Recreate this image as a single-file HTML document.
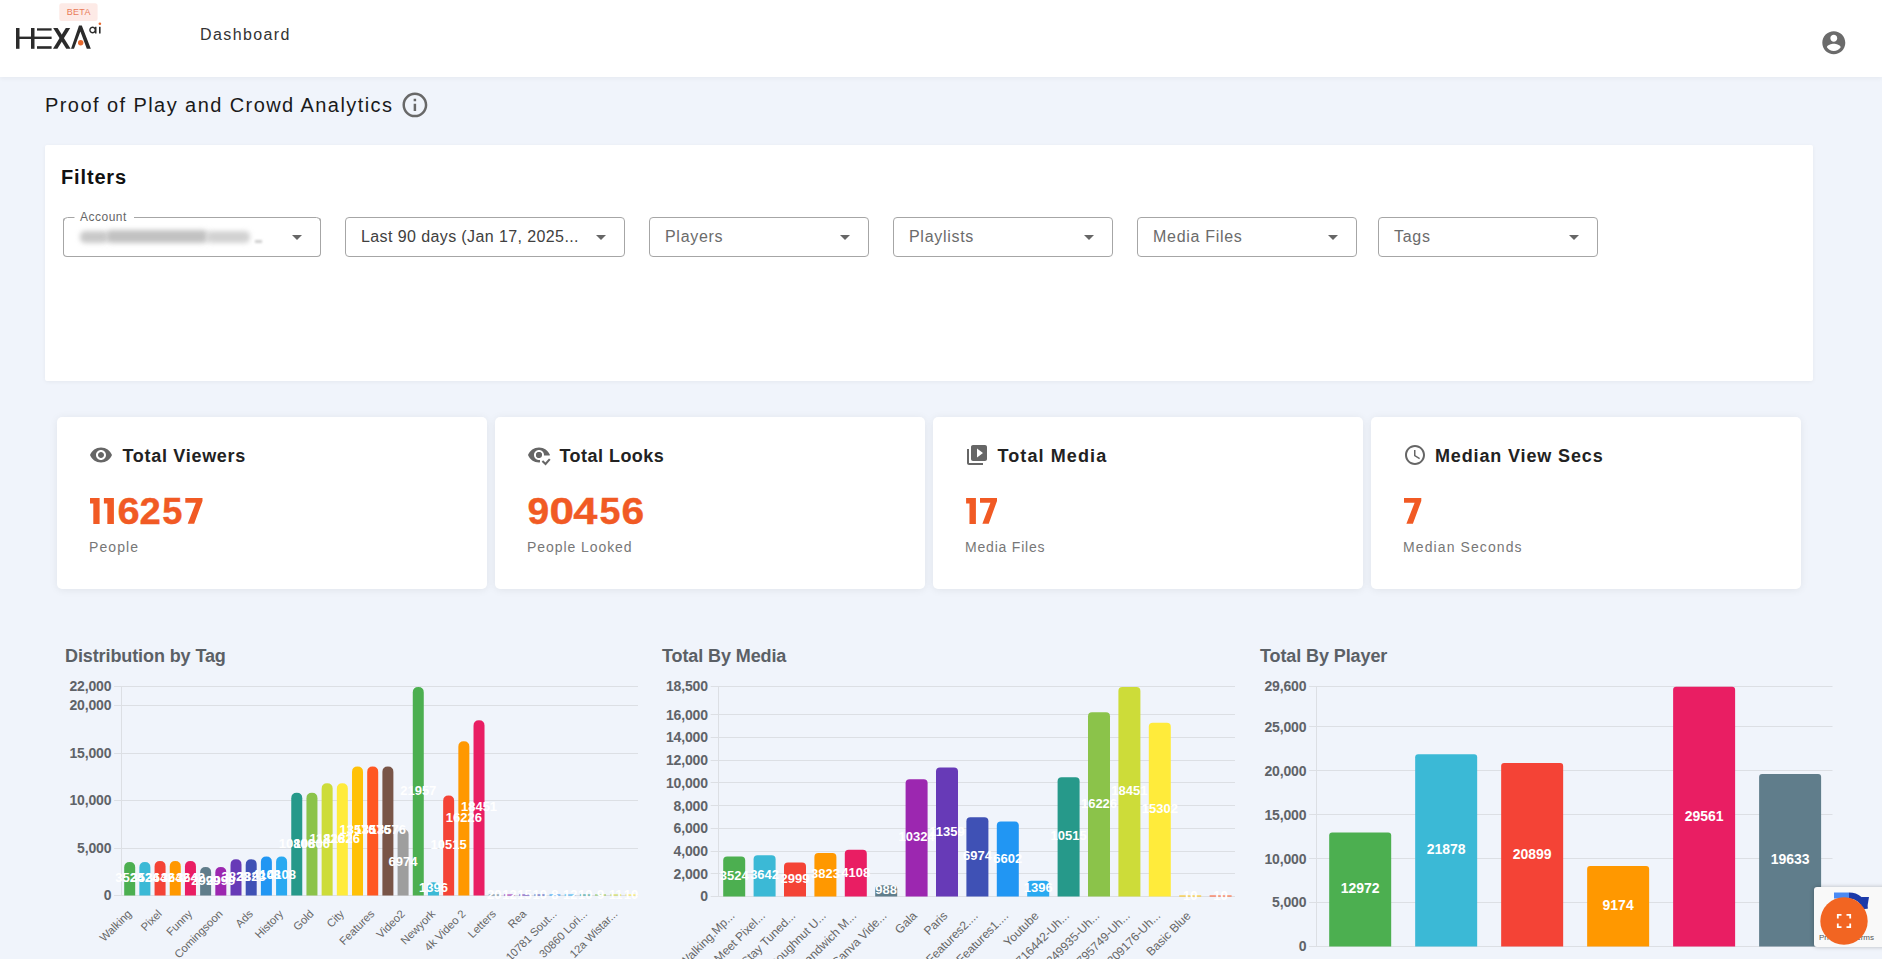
<!DOCTYPE html>
<html><head><meta charset="utf-8">
<style>
*{box-sizing:border-box;margin:0;padding:0}
html,body{width:1882px;height:959px;overflow:hidden}
body{background:#f0f4fb;font-family:"Liberation Sans", sans-serif;position:relative;color:#1a1a1a}
.abs{position:absolute}
#header{position:absolute;left:0;top:0;width:1882px;height:77px;background:#fff;box-shadow:0 2px 4px rgba(0,0,0,0.04)}
.nav{position:absolute;left:200px;top:26px;font-size:16px;color:#333;letter-spacing:1.4px;white-space:nowrap}
.title{position:absolute;left:45px;top:94px;font-size:20px;color:#1a1a1a;letter-spacing:1.43px;white-space:nowrap}
#filters{position:absolute;left:45px;top:145px;width:1768px;height:235.5px;background:#fff;border-radius:2px;box-shadow:0 1px 4px rgba(0,0,0,0.05)}
.ftitle{position:absolute;left:16px;top:21px;font-size:20px;font-weight:bold;color:#111;letter-spacing:0.85px}
.dd{position:absolute;top:72px;height:40px;border:1px solid #a6a6a6;border-radius:4px;font-size:16px;color:#666;letter-spacing:0.7px}
.dd .t{position:absolute;left:15px;top:10px;white-space:nowrap}
.dd .arr{position:absolute;right:18px;top:17px;width:0;height:0;border-left:5px solid transparent;border-right:5px solid transparent;border-top:5px solid #666}
.card{position:absolute;top:417px;width:430px;height:172px;background:#fff;border-radius:5px;box-shadow:0 1px 8px rgba(0,0,0,0.07)}
.card .ct{position:absolute;left:64px;top:29px;font-size:18px;font-weight:bold;color:#222;letter-spacing:0.86px;white-space:nowrap}
.card .num{position:absolute;left:33px;top:73px;font-size:37.5px;font-weight:bold;color:#f15a24;letter-spacing:0px;-webkit-text-stroke:0.5px #f15a24}
.card .sub{position:absolute;left:32px;top:121.5px;font-size:14px;color:#777;letter-spacing:1.1px;white-space:nowrap}
.card svg.ic{position:absolute;left:32px;top:26px}
.chtitle{position:absolute;top:646px;font-size:18px;letter-spacing:-0.1px;font-weight:bold;color:#5b6066;white-space:nowrap}
svg text{font-family:"Liberation Sans", sans-serif}
</style></head><body>
<div id="header">
  <svg class="abs" style="left:0;top:0" width="120" height="60" viewBox="0 0 120 60">
    <rect x="59.3" y="3.2" width="38.3" height="17.8" rx="2.5" fill="#fdeae6"/>
    <text x="78.8" y="15" font-size="9" fill="#e97b58" text-anchor="middle" letter-spacing="0.3">BETA</text>
    <g fill="#2b2b2b">
      <rect x="16" y="28" width="3.5" height="20.8"/>
      <rect x="31" y="28" width="3.5" height="20.8"/>
      <rect x="16" y="36.6" width="35.6" height="2.4"/>
      <rect x="37" y="28.3" width="14.6" height="2.3"/>
      <rect x="37" y="46.2" width="14.6" height="2.6"/>
      <polygon points="53.2,28 57.6,28 70.6,48.8 66.2,48.8"/>
      <polygon points="65.8,28 70.2,28 57.4,48.8 53,48.8"/>
      <polygon points="79,25.6 81.8,25.6 90.8,48.8 86.8,48.8 80.4,31.5 74,48.8 71,48.8"/>
      <path d="M92.6 26.6 a3.4 3.4 0 1 0 0.01 0 z M92.6 28 a2 2 0 1 1 -0.01 0 z" fill-rule="evenodd"/>
      <rect x="95" y="26.8" width="1.5" height="6.7"/>
      <rect x="99" y="26.8" width="1.6" height="6.7"/>
    </g>
    <circle cx="80.7" cy="42.7" r="2.7" fill="#e8692e"/>
    <circle cx="99.9" cy="23.7" r="1.3" fill="#e8692e"/>
  </svg>
  <div class="nav">Dashboard</div>
  <svg class="abs" style="left:1820.2px;top:28.6px" width="27.6" height="27.6" viewBox="0 0 24 24" fill="#6b6b6b">
    <path d="M12 2C6.48 2 2 6.48 2 12s4.48 10 10 10 10-4.48 10-10S17.52 2 12 2zm0 3c1.66 0 3 1.34 3 3s-1.34 3-3 3-3-1.34-3-3 1.34-3 3-3zm0 14.2c-2.5 0-4.71-1.28-6-3.22.03-1.99 4-3.08 6-3.08 1.99 0 5.970 1.09 6 3.08-1.29 1.940-3.5 3.22-6 3.22z"/>
  </svg>
</div>
<div class="title">Proof of Play and Crowd Analytics</div>
<svg class="abs" style="left:399.7px;top:89.5px" width="29.8" height="29.8" viewBox="0 0 24 24" fill="#686868">
  <path d="M11 7h2v2h-2zm0 4h2v6h-2zm1-9C6.48 2 2 6.48 2 12s4.48 10 10 10 10-4.48 10-10S17.52 2 12 2m0 18c-4.41 0-8-3.59-8-8s3.59-8 8-8 8 3.59 8 8-3.59 8-8 8"/>
</svg>
<div id="filters">
  <div class="ftitle">Filters</div>
  <div class="dd" style="left:18px;width:258px;border-top-color:transparent">
    <svg class="abs" style="left:-1px;top:-1px" width="258" height="10"><path d="M0.5 9 V4.5 Q0.5 0.5 4.5 0.5 H11.5 M71 0.5 H253.5 Q257.5 0.5 257.5 4.5 V9" fill="none" stroke="#a6a6a6" stroke-width="1"/></svg>
    <div class="abs" style="left:16px;top:-8px;font-size:12px;color:#666;letter-spacing:0.5px">Account</div>
    <div class="abs" style="left:16px;top:13px;width:28px;height:12px;border-radius:5px;background:#c9c9c9;filter:blur(2.5px)"></div>
    <div class="abs" style="left:42px;top:12px;width:102px;height:13px;border-radius:5px;background:#c2c2c2;filter:blur(2.5px)"></div>
    <div class="abs" style="left:142px;top:13px;width:44px;height:12px;border-radius:5px;background:#d2d2d2;filter:blur(2.5px)"></div>
    <div class="abs" style="left:191px;top:22px;width:7px;height:2.5px;background:#cfcfcf;filter:blur(0.8px)"></div>
    <div class="arr"></div>
  </div>
  <div class="dd" style="left:300px;width:280px;letter-spacing:0.4px"><div class="t" style="color:#404040">Last 90 days (Jan 17, 2025...</div><div class="arr"></div></div>
  <div class="dd" style="left:604px;width:220px"><div class="t" style="color:#6b6b6b">Players</div><div class="arr"></div></div>
  <div class="dd" style="left:848px;width:220px"><div class="t" style="color:#6b6b6b">Playlists</div><div class="arr"></div></div>
  <div class="dd" style="left:1092px;width:220px"><div class="t" style="color:#6b6b6b">Media Files</div><div class="arr"></div></div>
  <div class="dd" style="left:1333px;width:220px"><div class="t" style="color:#6b6b6b">Tags</div><div class="arr"></div></div>
</div>
<div class="card" style="left:57px">
  <svg class="ic" width="24" height="24" viewBox="0 0 24 24" fill="#666"><path d="M12 4.5C7 4.5 2.73 7.61 1 12c1.73 4.39 6 7.5 11 7.5s9.27-3.11 11-7.5c-1.73-4.39-6-7.5-11-7.5M12 17c-2.76 0-5-2.24-5-5s2.24-5 5-5 5 2.24 5 5-2.24 5-5 5m0-8c-1.66 0-3 1.34-3 3s1.34 3 3 3 3-1.34 3-3-1.34-3-3-3"/></svg>
  <div class="ct" style="letter-spacing:0.7px;left:65.5px">Total Viewers</div><div class="sub" style="">People</div>
</div>
<div class="card" style="left:495px">
  <svg class="ic" width="24" height="24" viewBox="0 0 24 24" fill="#666"><defs><clipPath id="clk"><path d="M0 0H24V12.6H13V24H0Z"/></clipPath></defs><path clip-path="url(#clk)" d="M12 4.5C7 4.5 2.73 7.61 1 12c1.73 4.39 6 7.5 11 7.5s9.27-3.11 11-7.5c-1.73-4.39-6-7.5-11-7.5M12 17c-2.76 0-5-2.24-5-5s2.24-5 5-5 5 2.24 5 5-2.24 5-5 5m0-8c-1.66 0-3 1.34-3 3s1.34 3 3 3 3-1.34 3-3-1.34-3-3-3"/><circle cx="12" cy="12" r="3"/><path d="M15.4 18.1l3.1 2.9l4.3-4.9" fill="none" stroke="#666" stroke-width="2.1"/></svg>
  <div class="ct" style="letter-spacing:0.46px;left:64.5px">Total Looks</div><div class="sub" style="letter-spacing:0.93px">People Looked</div>
</div>
<div class="card" style="left:933px">
  <svg class="ic" width="24" height="24" viewBox="0 0 24 24" fill="#666"><path d="M4 6H2v14c0 1.1.9 2 2 2h14v-2H4zm16-4H8c-1.1 0-2 .9-2 2v12c0 1.1.9 2 2 2h12c1.1 0 2-.9 2-2V4c0-1.1-.9-2-2-2m-8 12.5v-9l6 4.5z"/></svg>
  <div class="ct" style="letter-spacing:1.1px;left:64.5px">Total Media</div><div class="sub" style="letter-spacing:0.8px">Media Files</div>
</div>
<div class="card" style="left:1371px">
  <svg class="ic" width="24" height="24" viewBox="0 0 24 24" fill="#666"><path d="M11.99 2C6.47 2 2 6.48 2 12s4.47 10 9.99 10C17.52 22 22 17.52 22 12S17.52 2 11.99 2M12 20c-4.42 0-8-3.58-8-8s3.58-8 8-8 8 3.58 8 8-3.58 8-8 8m.5-13H11v6l5.25 3.15.75-1.23-4.5-2.67z"/></svg>
  <div class="ct" style="">Median View Secs</div><div class="sub" style="letter-spacing:1.1px">Median Seconds</div>
</div>

<div class="chtitle" style="left:65px">Distribution by Tag</div>
<div class="chtitle" style="left:662px">Total By Media</div>
<div class="chtitle" style="left:1260px">Total By Player</div>
<svg class="abs" style="left:0;top:0" width="1882" height="959">
<polygon fill="#f15a24" points="90.00,498.00 99.60,498.00 99.60,523.90 93.30,523.90 93.30,503.60 90.00,503.60"/>
<polygon fill="#f15a24" points="103.90,498.00 113.90,498.00 113.90,523.90 107.34,523.90 107.34,503.60 103.90,503.60"/>
<text transform="translate(119.20,524.2) scale(1.076,1)" x="-1.50" font-size="37" font-weight="bold" fill="#f15a24" stroke="#f15a24" stroke-width="0.4">6</text>
<text transform="translate(141.10,524.2) scale(1.035,1)" x="-1.50" font-size="37" font-weight="bold" fill="#f15a24" stroke="#f15a24" stroke-width="0.4">2</text>
<text transform="translate(163.70,524.2) scale(0.978,1)" x="-1.50" font-size="37" font-weight="bold" fill="#f15a24" stroke="#f15a24" stroke-width="0.4">5</text>
<polygon fill="#f15a24" points="185.30,497.90 202.50,497.90 202.50,500.90 194.15,523.70 187.69,523.70 195.84,502.70 185.30,502.70"/>
<text transform="translate(529.00,524.2) scale(1.053,1)" x="-1.50" font-size="37" font-weight="bold" fill="#f15a24" stroke="#f15a24" stroke-width="0.4">9</text>
<text transform="translate(551.40,524.2) scale(1.194,1)" x="-1.50" font-size="37" font-weight="bold" fill="#f15a24" stroke="#f15a24" stroke-width="0.4">0</text>
<text transform="translate(574.90,524.2) scale(1.172,1)" x="-1.50" font-size="37" font-weight="bold" fill="#f15a24" stroke="#f15a24" stroke-width="0.4">4</text>
<text transform="translate(601.10,524.2) scale(1.017,1)" x="-1.50" font-size="37" font-weight="bold" fill="#f15a24" stroke="#f15a24" stroke-width="0.4">5</text>
<text transform="translate(623.20,524.2) scale(1.100,1)" x="-1.50" font-size="37" font-weight="bold" fill="#f15a24" stroke="#f15a24" stroke-width="0.4">6</text>
<polygon fill="#f15a24" points="966.10,498.00 975.90,498.00 975.90,523.90 969.47,523.90 969.47,503.60 966.10,503.60"/>
<polygon fill="#f15a24" points="980.00,497.90 997.00,497.90 997.00,500.90 988.75,523.70 982.36,523.70 990.42,502.70 980.00,502.70"/>
<polygon fill="#f15a24" points="1404.00,497.90 1421.30,497.90 1421.30,500.90 1412.90,523.70 1406.40,523.70 1414.60,502.70 1404.00,502.70"/>
<line x1="114.1" y1="895.5" x2="638.0" y2="895.5" stroke="#dcdfe4" stroke-width="1"/>
<text x="111.3" y="900.3" text-anchor="end" font-size="14" font-weight="bold" fill="#5f6368" letter-spacing="-0.15">0</text>
<line x1="114.1" y1="848.5" x2="638.0" y2="848.5" stroke="#dcdfe4" stroke-width="1"/>
<text x="111.3" y="852.8" text-anchor="end" font-size="14" font-weight="bold" fill="#5f6368" letter-spacing="-0.15">5,000</text>
<line x1="114.1" y1="800.5" x2="638.0" y2="800.5" stroke="#dcdfe4" stroke-width="1"/>
<text x="111.3" y="805.3" text-anchor="end" font-size="14" font-weight="bold" fill="#5f6368" letter-spacing="-0.15">10,000</text>
<line x1="114.1" y1="753.5" x2="638.0" y2="753.5" stroke="#dcdfe4" stroke-width="1"/>
<text x="111.3" y="757.8" text-anchor="end" font-size="14" font-weight="bold" fill="#5f6368" letter-spacing="-0.15">15,000</text>
<line x1="114.1" y1="705.5" x2="638.0" y2="705.5" stroke="#dcdfe4" stroke-width="1"/>
<text x="111.3" y="710.3" text-anchor="end" font-size="14" font-weight="bold" fill="#5f6368" letter-spacing="-0.15">20,000</text>
<line x1="114.1" y1="686.5" x2="638.0" y2="686.5" stroke="#dcdfe4" stroke-width="1"/>
<text x="111.3" y="691.3" text-anchor="end" font-size="14" font-weight="bold" fill="#5f6368" letter-spacing="-0.15">22,000</text>
<line x1="121.5" y1="686.5" x2="121.5" y2="895.5" stroke="#dcdfe4" stroke-width="1"/>
<path d="M124.19 895.50 V867.52 Q124.19 862.02 129.69 862.02 H129.69 Q135.19 862.02 135.19 867.52 V895.50 Z" fill="#4caf50"/>
<path d="M139.38 895.50 V867.52 Q139.38 862.02 144.88 862.02 H144.88 Q150.38 862.02 150.38 867.52 V895.50 Z" fill="#3bb9d6"/>
<path d="M154.57 895.50 V866.40 Q154.57 860.90 160.07 860.90 H160.07 Q165.57 860.90 165.57 866.40 V895.50 Z" fill="#f44336"/>
<path d="M169.76 895.50 V866.40 Q169.76 860.90 175.26 860.90 H175.26 Q180.76 860.90 180.76 866.40 V895.50 Z" fill="#ff9800"/>
<path d="M184.95 895.50 V866.40 Q184.95 860.90 190.45 860.90 H190.45 Q195.95 860.90 195.95 866.40 V895.50 Z" fill="#e91e63"/>
<path d="M200.14 895.50 V872.51 Q200.14 867.01 205.64 867.01 H205.64 Q211.14 867.01 211.14 872.51 V895.50 Z" fill="#607d8b"/>
<path d="M215.32 895.50 V872.51 Q215.32 867.01 220.82 867.01 H220.82 Q226.32 867.01 226.32 872.51 V895.50 Z" fill="#9c27b0"/>
<path d="M230.51 895.50 V864.68 Q230.51 859.18 236.01 859.18 H236.01 Q241.51 859.18 241.51 864.68 V895.50 Z" fill="#673ab7"/>
<path d="M245.70 895.50 V864.68 Q245.70 859.18 251.20 859.18 H251.20 Q256.70 859.18 256.70 864.68 V895.50 Z" fill="#3f51b5"/>
<path d="M260.89 895.50 V861.97 Q260.89 856.47 266.39 856.47 H266.39 Q271.89 856.47 271.89 861.97 V895.50 Z" fill="#2196f3"/>
<path d="M276.08 895.50 V861.97 Q276.08 856.47 281.58 856.47 H281.58 Q287.08 856.47 287.08 861.97 V895.50 Z" fill="#29a9f1"/>
<path d="M291.26 895.50 V798.34 Q291.26 792.84 296.76 792.84 H296.76 Q302.26 792.84 302.26 798.34 V895.50 Z" fill="#26998a"/>
<path d="M306.45 895.50 V798.34 Q306.45 792.84 311.95 792.84 H311.95 Q317.45 792.84 317.45 798.34 V895.50 Z" fill="#8bc34a"/>
<path d="M321.64 895.50 V788.65 Q321.64 783.15 327.14 783.15 H327.14 Q332.64 783.15 332.64 788.65 V895.50 Z" fill="#cddc39"/>
<path d="M336.83 895.50 V788.65 Q336.83 783.15 342.33 783.15 H342.33 Q347.83 783.15 347.83 788.65 V895.50 Z" fill="#ffeb3b"/>
<path d="M352.02 895.50 V772.03 Q352.02 766.53 357.52 766.53 H357.52 Q363.02 766.53 363.02 772.03 V895.50 Z" fill="#ffc107"/>
<path d="M367.21 895.50 V772.03 Q367.21 766.53 372.71 766.53 H372.71 Q378.21 766.53 378.21 772.03 V895.50 Z" fill="#ff5722"/>
<path d="M382.39 895.50 V772.03 Q382.39 766.53 387.89 766.53 H387.89 Q393.39 766.53 393.39 772.03 V895.50 Z" fill="#795548"/>
<path d="M397.58 895.50 V834.75 Q397.58 829.25 403.08 829.25 H403.08 Q408.58 829.25 408.58 834.75 V895.50 Z" fill="#9e9e9e"/>
<path d="M412.77 895.50 V692.41 Q412.77 686.91 418.27 686.91 H418.27 Q423.77 686.91 423.77 692.41 V895.50 Z" fill="#4caf50"/>
<path d="M427.96 895.50 V887.74 Q427.96 882.24 433.46 882.24 H433.46 Q438.96 882.24 438.96 887.74 V895.50 Z" fill="#3bb9d6"/>
<path d="M443.15 895.50 V801.11 Q443.15 795.61 448.65 795.61 H448.65 Q454.15 795.61 454.15 801.11 V895.50 Z" fill="#f44336"/>
<path d="M458.34 895.50 V746.85 Q458.34 741.35 463.84 741.35 H463.84 Q469.34 741.35 469.34 746.85 V895.50 Z" fill="#ff9800"/>
<path d="M473.52 895.50 V725.72 Q473.52 720.22 479.02 720.22 H479.02 Q484.52 720.22 484.52 725.72 V895.50 Z" fill="#e91e63"/>
<rect x="488.71" y="894.50" width="11.00" height="1" fill="#607d8b"/>
<rect x="503.90" y="894.50" width="11.00" height="1" fill="#9c27b0"/>
<rect x="519.09" y="894.50" width="11.00" height="1" fill="#673ab7"/>
<rect x="534.28" y="894.50" width="11.00" height="1" fill="#3f51b5"/>
<rect x="549.46" y="894.50" width="11.00" height="1" fill="#2196f3"/>
<rect x="564.65" y="894.50" width="11.00" height="1" fill="#29a9f1"/>
<rect x="579.84" y="894.50" width="11.00" height="1" fill="#26998a"/>
<rect x="595.03" y="894.50" width="11.00" height="1" fill="#8bc34a"/>
<rect x="610.22" y="894.50" width="11.00" height="1" fill="#cddc39"/>
<rect x="625.41" y="894.50" width="11.00" height="1" fill="#ffeb3b"/>
<text x="129.69" y="882.24" text-anchor="middle" font-size="13" font-weight="bold" fill="#fff">3524</text>
<text x="144.88" y="882.24" text-anchor="middle" font-size="13" font-weight="bold" fill="#fff">3524</text>
<text x="160.07" y="881.68" text-anchor="middle" font-size="13" font-weight="bold" fill="#fff">3642</text>
<text x="175.26" y="881.68" text-anchor="middle" font-size="13" font-weight="bold" fill="#fff">3642</text>
<text x="190.45" y="881.68" text-anchor="middle" font-size="13" font-weight="bold" fill="#fff">3642</text>
<text x="205.64" y="884.73" text-anchor="middle" font-size="13" font-weight="bold" fill="#fff">2999</text>
<text x="220.82" y="884.73" text-anchor="middle" font-size="13" font-weight="bold" fill="#fff">2999</text>
<text x="236.01" y="880.82" text-anchor="middle" font-size="13" font-weight="bold" fill="#fff">3823</text>
<text x="251.20" y="880.82" text-anchor="middle" font-size="13" font-weight="bold" fill="#fff">3823</text>
<text x="266.39" y="879.47" text-anchor="middle" font-size="13" font-weight="bold" fill="#fff">4108</text>
<text x="281.58" y="879.47" text-anchor="middle" font-size="13" font-weight="bold" fill="#fff">4108</text>
<text x="296.76" y="847.65" text-anchor="middle" font-size="13" font-weight="bold" fill="#fff">10806</text>
<text x="311.95" y="847.65" text-anchor="middle" font-size="13" font-weight="bold" fill="#fff">10806</text>
<text x="327.14" y="842.81" text-anchor="middle" font-size="13" font-weight="bold" fill="#fff">11826</text>
<text x="342.33" y="842.81" text-anchor="middle" font-size="13" font-weight="bold" fill="#fff">11826</text>
<text x="357.52" y="834.49" text-anchor="middle" font-size="13" font-weight="bold" fill="#fff">13576</text>
<text x="372.71" y="834.49" text-anchor="middle" font-size="13" font-weight="bold" fill="#fff">13576</text>
<text x="387.89" y="834.49" text-anchor="middle" font-size="13" font-weight="bold" fill="#fff">13576</text>
<text x="403.08" y="865.85" text-anchor="middle" font-size="13" font-weight="bold" fill="#fff">6974</text>
<text x="418.27" y="794.68" text-anchor="middle" font-size="13" font-weight="bold" fill="#fff">21957</text>
<text x="433.46" y="892.35" text-anchor="middle" font-size="13" font-weight="bold" fill="#fff">1396</text>
<text x="448.65" y="849.03" text-anchor="middle" font-size="13" font-weight="bold" fill="#fff">10515</text>
<text x="463.84" y="821.91" text-anchor="middle" font-size="13" font-weight="bold" fill="#fff">16226</text>
<text x="479.02" y="811.34" text-anchor="middle" font-size="13" font-weight="bold" fill="#fff">18451</text>
<text x="494.21" y="898.88" text-anchor="middle" font-size="13" font-weight="bold" fill="#fff">20</text>
<text x="509.40" y="898.92" text-anchor="middle" font-size="13" font-weight="bold" fill="#fff">12</text>
<text x="524.59" y="898.91" text-anchor="middle" font-size="13" font-weight="bold" fill="#fff">15</text>
<text x="539.78" y="898.93" text-anchor="middle" font-size="13" font-weight="bold" fill="#fff">10</text>
<text x="554.96" y="898.94" text-anchor="middle" font-size="13" font-weight="bold" fill="#fff">8</text>
<text x="570.15" y="898.92" text-anchor="middle" font-size="13" font-weight="bold" fill="#fff">12</text>
<text x="585.34" y="898.93" text-anchor="middle" font-size="13" font-weight="bold" fill="#fff">10</text>
<text x="600.53" y="898.94" text-anchor="middle" font-size="13" font-weight="bold" fill="#fff">9</text>
<text x="615.72" y="898.93" text-anchor="middle" font-size="13" font-weight="bold" fill="#fff">11</text>
<text x="630.91" y="898.93" text-anchor="middle" font-size="13" font-weight="bold" fill="#fff">10</text>
<text transform="translate(132.19,914.50) rotate(-45)" text-anchor="end" font-size="11.2" fill="#666">Walking</text>
<text transform="translate(162.57,914.50) rotate(-45)" text-anchor="end" font-size="11.2" fill="#666">Pixel</text>
<text transform="translate(192.95,914.50) rotate(-45)" text-anchor="end" font-size="11.2" fill="#666">Funny</text>
<text transform="translate(223.32,914.50) rotate(-45)" text-anchor="end" font-size="11.2" fill="#666">Comingsoon</text>
<text transform="translate(253.70,914.50) rotate(-45)" text-anchor="end" font-size="11.2" fill="#666">Ads</text>
<text transform="translate(284.08,914.50) rotate(-45)" text-anchor="end" font-size="11.2" fill="#666">History</text>
<text transform="translate(314.45,914.50) rotate(-45)" text-anchor="end" font-size="11.2" fill="#666">Gold</text>
<text transform="translate(344.83,914.50) rotate(-45)" text-anchor="end" font-size="11.2" fill="#666">City</text>
<text transform="translate(375.21,914.50) rotate(-45)" text-anchor="end" font-size="11.2" fill="#666">Features</text>
<text transform="translate(405.58,914.50) rotate(-45)" text-anchor="end" font-size="11.2" fill="#666">Video2</text>
<text transform="translate(435.96,914.50) rotate(-45)" text-anchor="end" font-size="11.2" fill="#666">Newyork</text>
<text transform="translate(466.34,914.50) rotate(-45)" text-anchor="end" font-size="11.2" fill="#666">4k Video 2</text>
<text transform="translate(496.71,914.50) rotate(-45)" text-anchor="end" font-size="11.2" fill="#666">Letters</text>
<text transform="translate(527.09,914.50) rotate(-45)" text-anchor="end" font-size="11.2" fill="#666">Rea</text>
<text transform="translate(557.46,914.50) rotate(-45)" text-anchor="end" font-size="11.2" fill="#666">10781 Sout...</text>
<text transform="translate(587.84,914.50) rotate(-45)" text-anchor="end" font-size="11.2" fill="#666">30860 Lori...</text>
<text transform="translate(618.22,914.50) rotate(-45)" text-anchor="end" font-size="11.2" fill="#666">12a Wistar...</text>
<line x1="710.7" y1="896.5" x2="1235.0" y2="896.5" stroke="#dcdfe4" stroke-width="1"/>
<text x="707.9" y="901.3" text-anchor="end" font-size="14" font-weight="bold" fill="#5f6368" letter-spacing="-0.15">0</text>
<line x1="710.7" y1="873.5" x2="1235.0" y2="873.5" stroke="#dcdfe4" stroke-width="1"/>
<text x="707.9" y="878.6" text-anchor="end" font-size="14" font-weight="bold" fill="#5f6368" letter-spacing="-0.15">2,000</text>
<line x1="710.7" y1="851.5" x2="1235.0" y2="851.5" stroke="#dcdfe4" stroke-width="1"/>
<text x="707.9" y="855.9" text-anchor="end" font-size="14" font-weight="bold" fill="#5f6368" letter-spacing="-0.15">4,000</text>
<line x1="710.7" y1="828.5" x2="1235.0" y2="828.5" stroke="#dcdfe4" stroke-width="1"/>
<text x="707.9" y="833.2" text-anchor="end" font-size="14" font-weight="bold" fill="#5f6368" letter-spacing="-0.15">6,000</text>
<line x1="710.7" y1="805.5" x2="1235.0" y2="805.5" stroke="#dcdfe4" stroke-width="1"/>
<text x="707.9" y="810.5" text-anchor="end" font-size="14" font-weight="bold" fill="#5f6368" letter-spacing="-0.15">8,000</text>
<line x1="710.7" y1="782.5" x2="1235.0" y2="782.5" stroke="#dcdfe4" stroke-width="1"/>
<text x="707.9" y="787.8" text-anchor="end" font-size="14" font-weight="bold" fill="#5f6368" letter-spacing="-0.15">10,000</text>
<line x1="710.7" y1="760.5" x2="1235.0" y2="760.5" stroke="#dcdfe4" stroke-width="1"/>
<text x="707.9" y="765.1" text-anchor="end" font-size="14" font-weight="bold" fill="#5f6368" letter-spacing="-0.15">12,000</text>
<line x1="710.7" y1="737.5" x2="1235.0" y2="737.5" stroke="#dcdfe4" stroke-width="1"/>
<text x="707.9" y="742.4" text-anchor="end" font-size="14" font-weight="bold" fill="#5f6368" letter-spacing="-0.15">14,000</text>
<line x1="710.7" y1="714.5" x2="1235.0" y2="714.5" stroke="#dcdfe4" stroke-width="1"/>
<text x="707.9" y="719.7" text-anchor="end" font-size="14" font-weight="bold" fill="#5f6368" letter-spacing="-0.15">16,000</text>
<line x1="710.7" y1="686.5" x2="1235.0" y2="686.5" stroke="#dcdfe4" stroke-width="1"/>
<text x="707.9" y="691.3" text-anchor="end" font-size="14" font-weight="bold" fill="#5f6368" letter-spacing="-0.15">18,500</text>
<line x1="718.5" y1="686.5" x2="718.5" y2="896.5" stroke="#dcdfe4" stroke-width="1"/>
<path d="M723.20 896.50 V860.50 Q723.20 856.50 727.20 856.50 H741.20 Q745.20 856.50 745.20 860.50 V896.50 Z" fill="#4caf50"/>
<path d="M753.60 896.50 V859.16 Q753.60 855.16 757.60 855.16 H771.60 Q775.60 855.16 775.60 859.16 V896.50 Z" fill="#3bb9d6"/>
<path d="M784.00 896.50 V866.46 Q784.00 862.46 788.00 862.46 H802.00 Q806.00 862.46 806.00 866.46 V896.50 Z" fill="#f44336"/>
<path d="M814.40 896.50 V857.10 Q814.40 853.10 818.40 853.10 H832.40 Q836.40 853.10 836.40 857.10 V896.50 Z" fill="#ff9800"/>
<path d="M844.80 896.50 V853.87 Q844.80 849.87 848.80 849.87 H862.80 Q866.80 849.87 866.80 853.87 V896.50 Z" fill="#e91e63"/>
<path d="M875.20 896.50 V889.28 Q875.20 885.28 879.20 885.28 H893.20 Q897.20 885.28 897.20 889.28 V896.50 Z" fill="#607d8b"/>
<path d="M905.60 896.50 V783.31 Q905.60 779.31 909.60 779.31 H923.60 Q927.60 779.31 927.60 783.31 V896.50 Z" fill="#9c27b0"/>
<path d="M936.00 896.50 V771.56 Q936.00 767.56 940.00 767.56 H954.00 Q958.00 767.56 958.00 771.56 V896.50 Z" fill="#673ab7"/>
<path d="M966.40 896.50 V821.34 Q966.40 817.34 970.40 817.34 H984.40 Q988.40 817.34 988.40 821.34 V896.50 Z" fill="#3f51b5"/>
<path d="M996.80 896.50 V825.56 Q996.80 821.56 1000.80 821.56 H1014.80 Q1018.80 821.56 1018.80 825.56 V896.50 Z" fill="#2196f3"/>
<path d="M1027.20 896.50 V884.65 Q1027.20 880.65 1031.20 880.65 H1045.20 Q1049.20 880.65 1049.20 884.65 V896.50 Z" fill="#29a9f1"/>
<path d="M1057.60 896.50 V781.14 Q1057.60 777.14 1061.60 777.14 H1075.60 Q1079.60 777.14 1079.60 781.14 V896.50 Z" fill="#26998a"/>
<path d="M1088.00 896.50 V716.31 Q1088.00 712.31 1092.00 712.31 H1106.00 Q1110.00 712.31 1110.00 716.31 V896.50 Z" fill="#8bc34a"/>
<path d="M1118.40 896.50 V691.06 Q1118.40 687.06 1122.40 687.06 H1136.40 Q1140.40 687.06 1140.40 691.06 V896.50 Z" fill="#cddc39"/>
<path d="M1148.80 896.50 V726.80 Q1148.80 722.80 1152.80 722.80 H1166.80 Q1170.80 722.80 1170.80 726.80 V896.50 Z" fill="#ffeb3b"/>
<rect x="1179.20" y="895.50" width="22.00" height="1" fill="#ffc107"/>
<rect x="1209.60" y="895.50" width="22.00" height="1" fill="#ff5722"/>
<text x="734.20" y="879.98" text-anchor="middle" font-size="13" font-weight="bold" fill="#fff">3524</text>
<text x="764.60" y="879.31" text-anchor="middle" font-size="13" font-weight="bold" fill="#fff">3642</text>
<text x="795.00" y="882.96" text-anchor="middle" font-size="13" font-weight="bold" fill="#fff">2999</text>
<text x="825.40" y="878.28" text-anchor="middle" font-size="13" font-weight="bold" fill="#fff">3823</text>
<text x="855.80" y="876.66" text-anchor="middle" font-size="13" font-weight="bold" fill="#fff">4108</text>
<text x="886.20" y="894.37" text-anchor="middle" font-size="13" font-weight="bold" fill="#fff">988</text>
<text x="916.60" y="841.38" text-anchor="middle" font-size="13" font-weight="bold" fill="#fff">10324</text>
<text x="947.00" y="835.51" text-anchor="middle" font-size="13" font-weight="bold" fill="#fff">11359</text>
<text x="977.40" y="860.40" text-anchor="middle" font-size="13" font-weight="bold" fill="#fff">6974</text>
<text x="1007.80" y="862.51" text-anchor="middle" font-size="13" font-weight="bold" fill="#fff">6602</text>
<text x="1038.20" y="892.06" text-anchor="middle" font-size="13" font-weight="bold" fill="#fff">1396</text>
<text x="1068.60" y="840.30" text-anchor="middle" font-size="13" font-weight="bold" fill="#fff">10515</text>
<text x="1099.00" y="807.89" text-anchor="middle" font-size="13" font-weight="bold" fill="#fff">16226</text>
<text x="1129.40" y="795.26" text-anchor="middle" font-size="13" font-weight="bold" fill="#fff">18451</text>
<text x="1159.80" y="813.13" text-anchor="middle" font-size="13" font-weight="bold" fill="#fff">15302</text>
<text x="1190.20" y="899.92" text-anchor="middle" font-size="13" font-weight="bold" fill="#fff">10</text>
<text x="1220.60" y="899.92" text-anchor="middle" font-size="13" font-weight="bold" fill="#fff">10</text>
<text transform="translate(735.40,916.50) rotate(-45)" text-anchor="end" font-size="12" fill="#666">Walking.Mp...</text>
<text transform="translate(765.80,916.50) rotate(-45)" text-anchor="end" font-size="12" fill="#666">Meet Pixel...</text>
<text transform="translate(796.20,916.50) rotate(-45)" text-anchor="end" font-size="12" fill="#666">Stay Tuned...</text>
<text transform="translate(826.60,916.50) rotate(-45)" text-anchor="end" font-size="12" fill="#666">Doughnut U...</text>
<text transform="translate(857.00,916.50) rotate(-45)" text-anchor="end" font-size="12" fill="#666">Sandwich M...</text>
<text transform="translate(887.40,916.50) rotate(-45)" text-anchor="end" font-size="12" fill="#666">Canva Vide...</text>
<text transform="translate(917.80,916.50) rotate(-45)" text-anchor="end" font-size="12" fill="#666">Gala</text>
<text transform="translate(948.20,916.50) rotate(-45)" text-anchor="end" font-size="12" fill="#666">Paris</text>
<text transform="translate(978.60,916.50) rotate(-45)" text-anchor="end" font-size="12" fill="#666">Features2....</text>
<text transform="translate(1009.00,916.50) rotate(-45)" text-anchor="end" font-size="12" fill="#666">Features1....</text>
<text transform="translate(1039.40,916.50) rotate(-45)" text-anchor="end" font-size="12" fill="#666">Youtube</text>
<text transform="translate(1069.80,916.50) rotate(-45)" text-anchor="end" font-size="12" fill="#666">1716442-Uh...</text>
<text transform="translate(1100.20,916.50) rotate(-45)" text-anchor="end" font-size="12" fill="#666">1249935-Uh...</text>
<text transform="translate(1130.60,916.50) rotate(-45)" text-anchor="end" font-size="12" fill="#666">1795749-Uh...</text>
<text transform="translate(1161.00,916.50) rotate(-45)" text-anchor="end" font-size="12" fill="#666">1209176-Uh...</text>
<text transform="translate(1191.40,916.50) rotate(-45)" text-anchor="end" font-size="12" fill="#666">Basic Blue</text>
<line x1="1309.1" y1="946.5" x2="1832.5" y2="946.5" stroke="#dcdfe4" stroke-width="1"/>
<text x="1306.3" y="951.3" text-anchor="end" font-size="14" font-weight="bold" fill="#5f6368" letter-spacing="-0.15">0</text>
<line x1="1309.1" y1="902.5" x2="1832.5" y2="902.5" stroke="#dcdfe4" stroke-width="1"/>
<text x="1306.3" y="907.4" text-anchor="end" font-size="14" font-weight="bold" fill="#5f6368" letter-spacing="-0.15">5,000</text>
<line x1="1309.1" y1="858.5" x2="1832.5" y2="858.5" stroke="#dcdfe4" stroke-width="1"/>
<text x="1306.3" y="863.5" text-anchor="end" font-size="14" font-weight="bold" fill="#5f6368" letter-spacing="-0.15">10,000</text>
<line x1="1309.1" y1="814.5" x2="1832.5" y2="814.5" stroke="#dcdfe4" stroke-width="1"/>
<text x="1306.3" y="819.5" text-anchor="end" font-size="14" font-weight="bold" fill="#5f6368" letter-spacing="-0.15">15,000</text>
<line x1="1309.1" y1="770.5" x2="1832.5" y2="770.5" stroke="#dcdfe4" stroke-width="1"/>
<text x="1306.3" y="775.6" text-anchor="end" font-size="14" font-weight="bold" fill="#5f6368" letter-spacing="-0.15">20,000</text>
<line x1="1309.1" y1="726.5" x2="1832.5" y2="726.5" stroke="#dcdfe4" stroke-width="1"/>
<text x="1306.3" y="731.7" text-anchor="end" font-size="14" font-weight="bold" fill="#5f6368" letter-spacing="-0.15">25,000</text>
<line x1="1309.1" y1="686.5" x2="1832.5" y2="686.5" stroke="#dcdfe4" stroke-width="1"/>
<text x="1306.3" y="691.3" text-anchor="end" font-size="14" font-weight="bold" fill="#5f6368" letter-spacing="-0.15">29,600</text>
<line x1="1316.5" y1="686.5" x2="1316.5" y2="946.5" stroke="#dcdfe4" stroke-width="1"/>
<path d="M1329.19 946.50 V835.56 Q1329.19 832.56 1332.19 832.56 H1388.19 Q1391.19 832.56 1391.19 835.56 V946.50 Z" fill="#4caf50"/>
<path d="M1415.17 946.50 V757.33 Q1415.17 754.33 1418.17 754.33 H1474.17 Q1477.17 754.33 1477.17 757.33 V946.50 Z" fill="#3bb9d6"/>
<path d="M1501.16 946.50 V765.93 Q1501.16 762.93 1504.16 762.93 H1560.16 Q1563.16 762.93 1563.16 765.93 V946.50 Z" fill="#f44336"/>
<path d="M1587.14 946.50 V868.92 Q1587.14 865.92 1590.14 865.92 H1646.14 Q1649.14 865.92 1649.14 868.92 V946.50 Z" fill="#ff9800"/>
<path d="M1673.12 946.50 V689.84 Q1673.12 686.84 1676.12 686.84 H1732.12 Q1735.12 686.84 1735.12 689.84 V946.50 Z" fill="#e91e63"/>
<path d="M1759.11 946.50 V777.05 Q1759.11 774.05 1762.11 774.05 H1818.11 Q1821.11 774.05 1821.11 777.05 V946.50 Z" fill="#607d8b"/>
<text x="1360.19" y="893.37" text-anchor="middle" font-size="14" font-weight="bold" fill="#fff">12972</text>
<text x="1446.17" y="854.25" text-anchor="middle" font-size="14" font-weight="bold" fill="#fff">21878</text>
<text x="1532.16" y="858.55" text-anchor="middle" font-size="14" font-weight="bold" fill="#fff">20899</text>
<text x="1618.14" y="910.05" text-anchor="middle" font-size="14" font-weight="bold" fill="#fff">9174</text>
<text x="1704.12" y="820.51" text-anchor="middle" font-size="14" font-weight="bold" fill="#fff">29561</text>
<text x="1790.11" y="864.11" text-anchor="middle" font-size="14" font-weight="bold" fill="#fff">19633</text>
</svg>
<div class="abs" style="left:1814px;top:887px;width:80px;height:60px;background:#f9f9f9;border-radius:3px;box-shadow:0 0 4px rgba(0,0,0,0.25)">
  <svg class="abs" style="left:0;top:0" width="68" height="60"><path d="M20 8.5 H35" stroke="#4a8af4" stroke-width="6"/><path d="M35 8.5 A16 16 0 0 1 51 22" stroke="#1c3aa9" stroke-width="6" fill="none"/><path d="M47 10 L55 10 L53 22 Z" fill="#1c3aa9"/><text x="5" y="53" font-size="8" fill="#555">Privacy - Terms</text></svg>
</div>
<svg class="abs" style="left:1820px;top:897px" width="48" height="48" viewBox="0 0 48 48">
  <circle cx="24" cy="24" r="23.7" fill="#f26522"/>
  <path d="M17.8 21.5 V17.8 H21.5 M26.5 17.8 H30.2 V21.5 M30.2 26.5 V30.2 H26.5 M21.5 30.2 H17.8 V26.5" fill="none" stroke="#fff" stroke-width="1.8"/>
</svg>
</body></html>
